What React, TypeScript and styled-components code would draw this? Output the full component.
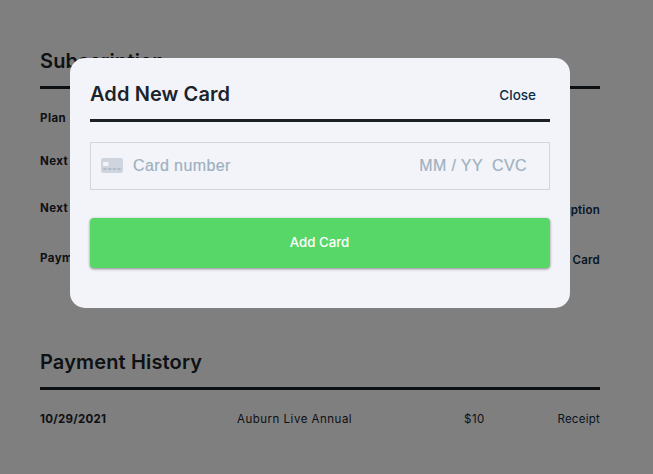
import React from "react";
import styled, { createGlobalStyle } from "styled-components";

const Global = createGlobalStyle`
  * { box-sizing: border-box; }
  html, body { margin: 0; background: #fff; overflow: hidden; }
  body { font-family: Inter, Arial, sans-serif; color: #1d2228; }
`;

const Page = styled.main`
  width: 653px;
  height: 474px;
  padding: 43px 53px 0 40px;
`;

const Section = styled.section<{ $height?: number }>`
  height: ${(p) => (p.$height ? `${p.$height}px` : "auto")};
`;

const Heading = styled.h2`
  margin: 0;
  height: 46px;
  padding-top: 2px;
  border-bottom: 3px solid #1b2027;
  font: 600 20px/32px Inter, sans-serif;
  letter-spacing: 0.15px;
  color: #1b242b;
  white-space: nowrap;
`;

const Row = styled.div<{ $height: number; $drop?: number }>`
  display: flex;
  justify-content: space-between;
  align-items: center;
  height: ${(p) => p.$height}px;
  padding-top: ${(p) => p.$drop ?? 0}px;
  font-size: 11.5px;
  line-height: 14px;
`;

const Label = styled.span<{ $spacing?: number }>`
  font-weight: 650;
  letter-spacing: ${(p) => p.$spacing ?? 0.45}px;
`;

const Link = styled.a`
  position: relative;
  top: 2px;
  color: #0c2d48;
  font-weight: 600;
  letter-spacing: 0.2px;
`;

const PaymentRow = styled.div`
  display: grid;
  grid-template-columns: 197px 227px 1fr auto;
  padding-top: 22px;
  font-size: 11.5px;
  line-height: 14px;
  letter-spacing: 0.5px;
`;

const Receipt = styled.a`
  color: #0c2d48;
  letter-spacing: 0.25px;
`;

const Overlay = styled.div`
  position: fixed;
  inset: 0;
  background: rgba(0, 0, 0, 0.5);
  padding: 58px 83px 0 70px;
`;

const Dialog = styled.div`
  height: 250px;
  padding: 18px 20px 0;
  border-radius: 15px;
  background: #f3f4f9;
`;

const DialogHeader = styled.header`
  display: flex;
  justify-content: space-between;
  height: 46px;
  padding-right: 14px;
  border-bottom: 3px solid #1b2027;
`;

const DialogTitle = styled.h2`
  margin: 0;
  padding-top: 2px;
  font: 600 20px/32px Inter, sans-serif;
  letter-spacing: 0.1px;
  color: #1b242b;
`;

const CloseButton = styled.button`
  height: 38px;
  padding: 0;
  border: 0;
  background: none;
  font: 500 13.5px/38px Inter, Arial, sans-serif;
  color: #0c2d48;
`;

const CardField = styled.div`
  display: flex;
  align-items: center;
  height: 48px;
  margin-top: 20px;
  padding: 0 22px 0 10px;
  border: 1px solid #d3d5da;
  font: 16px/20px "Liberation Sans", Arial, sans-serif;
  letter-spacing: 0.4px;
  color: #9eb0bf;
  -webkit-text-stroke: 0.2px currentColor;
`;

const CardIcon = styled.svg`
  width: 22px;
  height: 15px;
  margin: 0 10px 1px 0;
`;

const Expiry = styled.span`
  margin-left: auto;
  margin-right: 9px;
`;

const AddButton = styled.button`
  width: 100%;
  height: 50px;
  margin-top: 28px;
  padding: 0 1px 2px 0;
  border: 0;
  border-radius: 4px;
  background: #57d768;
  box-shadow: 0 1px 3px rgba(0, 0, 0, 0.45);
  color: #fff;
  font: 500 13.3px Inter, Arial, sans-serif;
`;

export default function App() {
  return (
    <>
      <Global />
      <Page>
        <Section $height={301}>
          <Heading>Subscription</Heading>
          <Row $height={43} $drop={15}><Label>Plan</Label></Row>
          <Row $height={43} $drop={15}><Label>Next Payment</Label></Row>
          <Row $height={47} $drop={19}><Label>Next Charge</Label><Link>Cancel Subscription</Link></Row>
          <Row $height={50} $drop={22}><Label>Payment Method</Label><Link>Update Card</Link></Row>
        </Section>
        <Section>
          <Heading>Payment History</Heading>
          <PaymentRow>
            <Label $spacing={0.28}>10/29/2021</Label>
            <span>Auburn Live Annual</span>
            <span>$10</span>
            <Receipt>Receipt</Receipt>
          </PaymentRow>
        </Section>
      </Page>
      <Overlay>
        <Dialog role="dialog" aria-label="Add New Card">
          <DialogHeader>
            <DialogTitle>Add New Card</DialogTitle>
            <CloseButton>Close</CloseButton>
          </DialogHeader>
          <CardField>
            <CardIcon viewBox="0 0 22 15" stroke="none" aria-hidden="true">
              <rect width="22" height="15" rx="2" fill="#cfd5df" />
              <rect x="2" y="4" width="5.5" height="4" rx="1" fill="#f3f4f9" />
              <path d="M2.3 11h3.4M7 11h3.4M11.7 11h3.4M16.3 11h3.4" stroke="#aab4c2" strokeWidth="1.4" />
            </CardIcon>
            <span>Card number</span>
            <Expiry>MM / YY</Expiry>
            <span>CVC</span>
          </CardField>
          <AddButton>Add Card</AddButton>
        </Dialog>
      </Overlay>
    </>
  );
}
